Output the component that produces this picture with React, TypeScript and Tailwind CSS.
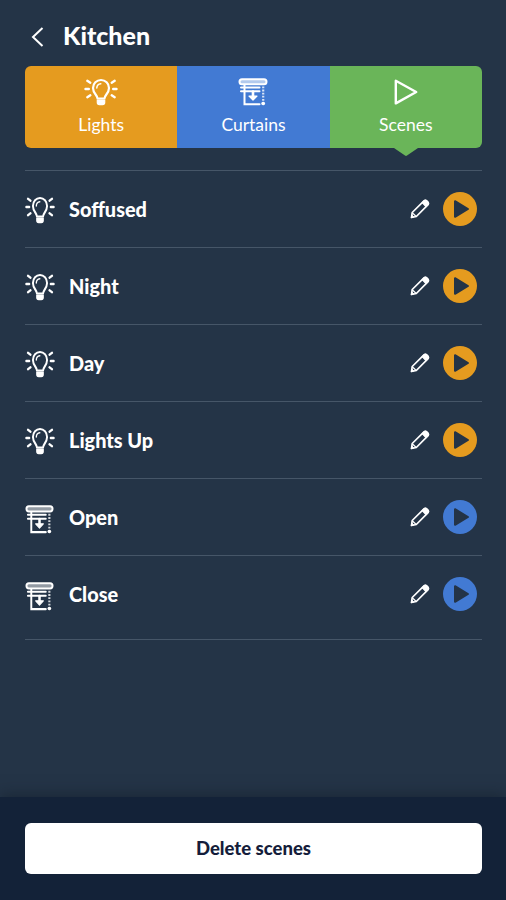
import type { ReactNode } from 'react';

const BulbIcon = ({ className }: { className?: string }) => (
  <svg viewBox="0 0 34 28" preserveAspectRatio="none" fill="none" stroke="currentColor" strokeWidth="2.200" strokeLinecap="round" className={className}>
    <path d="M13.500 20.500c0-3.500-4.500-5-4.500-10.500a8 8 0 0 1 16 0c0 5.500-4.500 7-4.500 10.500z" strokeLinejoin="round" />
    <path d="M12.800 10c.1-2.500 1.700-4.100 4-4.300" strokeWidth="1.500" />
    <path d="M13.300 22h7.400v2.500c0 1.500-.9 2.200-2.200 2.200h-3c-1.300 0-2.200-.7-2.200-2.200z" fill="currentColor" strokeWidth="1.200" />
    <path d="M1.500 11h3.300M3.300 2.800l3 1.900M3.300 19.200l3-1.900M32.500 11h-3.300M30.700 2.800l-3 1.900M30.700 19.200l-3-1.900" strokeWidth="2.400" />
  </svg>
);

const CurtainIcon = ({ className, roll }: { className?: string; roll: string }) => (
  <svg viewBox="0 0 30 28" preserveAspectRatio="none" fill="none" stroke="currentColor" strokeWidth="2" strokeLinecap="round" className={className}>
    <rect x="1.500" y="1.200" width="27" height="5" rx="2.500" className={roll} />
    <path d="M3 9.400h18.500M3 13.200h18.500M6.500 7v19.200h15" />
    <path d="M15 13.500v5.500" strokeWidth="2.600" />
    <path d="M11 18.200h8L15 22.200z" fill="currentColor" strokeWidth="1.200" strokeLinejoin="round" />
    <path d="M25.200 8.500v15.500" strokeWidth="2.200" strokeLinecap="butt" strokeDasharray="1.800 1.300" className="opacity-80" />
    <path d="M25 25.500h.4" strokeWidth="3.400" />
  </svg>
);

const ScenesIcon = () => (
  <svg viewBox="0 0 26 28" fill="none" stroke="currentColor" strokeWidth="2.400" strokeLinejoin="round" className="h-7 w-[26px]">
    <path d="M2.800 2.800v22.600L23.200 14z" />
  </svg>
);

const PencilIcon = () => (
  <svg viewBox="0 0 22 22" fill="none" stroke="currentColor" strokeLinejoin="round" className="h-[22px] w-[22px]">
    <path d="M2.500 19.500l.7-5L14.700 3.200c1-1 2-1 3-.1l1 1c1 1 .9 2-.1 3L7.300 18.500z" strokeWidth="1.700" />
    <path d="M13.200 4.700l2-1.900c.9-.8 1.800-.8 2.700 0l1.100 1.200c.8.900.8 1.800 0 2.700l-2 2z" fill="currentColor" strokeWidth="1.200" />
    <path d="M3.200 14.800l3.800 3.500" strokeWidth="1.200" />
    <path d="M2.300 19.700l.5-2.700 2 2z" fill="currentColor" />
  </svg>
);

const PlayButton = ({ color }: { color: string }) => (
  <button className={`flex h-[34px] w-[34px] items-center justify-center rounded-full ${color}`}>
    <svg viewBox="0 0 34 34" className="h-[34px] w-[34px] fill-[#243447] stroke-[#243447]" strokeWidth="2" strokeLinejoin="round">
      <path d="M12 9.200v15.600L25 17z" />
    </svg>
  </button>
);

const tabs: { label: string; color: string; icon: ReactNode; active?: boolean }[] = [
  { label: 'Lights', color: 'bg-[#e59b1f] rounded-l-md', icon: <BulbIcon className="h-7 w-[34px]" /> },
  { label: 'Curtains', color: 'bg-[#427ad3]', icon: <CurtainIcon className="h-7 w-[30px]" roll="fill-white/60" /> },
  { label: 'Scenes', color: 'bg-[#6ab559] rounded-r-md', icon: <ScenesIcon />, active: true },
];

const scenes = [
  { name: 'Soffused', type: 'light' },
  { name: 'Night', type: 'light' },
  { name: 'Day', type: 'light' },
  { name: 'Lights Up', type: 'light' },
  { name: 'Open', type: 'curtain' },
  { name: 'Close', type: 'curtain' },
];

export default function App() {
  return (
    <div className="flex h-[900px] w-full flex-col overflow-hidden bg-[#243447] font-['Lato',sans-serif] text-white">
      <header className="flex h-[66px] items-center gap-[18px] pl-[31px] pt-1">
        <svg viewBox="0 0 14 20" fill="none" stroke="currentColor" strokeWidth="2" className="mt-1 h-5 w-3.5">
          <path d="M11.500 1L2 10l9.500 9" />
        </svg>
        <h1 className="text-[25px] font-black leading-8">Kitchen</h1>
      </header>

      <nav className="mx-6 ml-[25px] grid h-[82px] shrink-0 grid-cols-3">
        {tabs.map((tab) => (
          <button key={tab.label} className={`relative flex flex-col items-center pt-3 ${tab.color}`}>
            {tab.icon}
            <span className="mt-[7px] text-[17.500px] leading-6">{tab.label}</span>
            {tab.active && (
              <svg viewBox="0 0 24 9" className="absolute -bottom-2 left-1/2 h-[9px] w-6 -translate-x-1/2 fill-[#6ab559]">
                <path d="M0 0h24v1L13 8.500q-1 .8-2 0L0 1z" />
              </svg>
            )}
          </button>
        ))}
      </nav>

      <ul className="mx-6 ml-[25px] mt-[22px] border-y border-[#465668] pb-[7px]">
        {scenes.map((scene) => (
          <li key={scene.name} className="flex h-[77px] items-center border-b border-[#465668] pr-[5px] last:h-[76px] last:border-b-0">
            <div className="flex w-11 items-center">
              {scene.type === 'light' ? (
                <BulbIcon className="mt-0.5 h-7 w-[30px]" />
              ) : (
                <CurtainIcon className="mt-1 h-[29px] w-[29px]" roll="fill-white/50" />
              )}
            </div>
            <span className="-mt-px flex-1 text-[19.900px] font-black leading-6">{scene.name}</span>
            <button className="mr-3">
              <PencilIcon />
            </button>
            <PlayButton color={scene.type === 'light' ? 'bg-[#e59b1f]' : 'bg-[#427ad3]'} />
          </li>
        ))}
      </ul>

      <footer className="mt-auto h-[103px] bg-[#132238] pl-[25px] pr-6 pt-[26px] shadow-[0_-2px_14px_rgba(15,25,35,0.5)]">
        <button className="h-[51px] w-full rounded-md bg-white text-[18.500px] font-black text-[#151d3b]">Delete scenes</button>
      </footer>
    </div>
  );
}
